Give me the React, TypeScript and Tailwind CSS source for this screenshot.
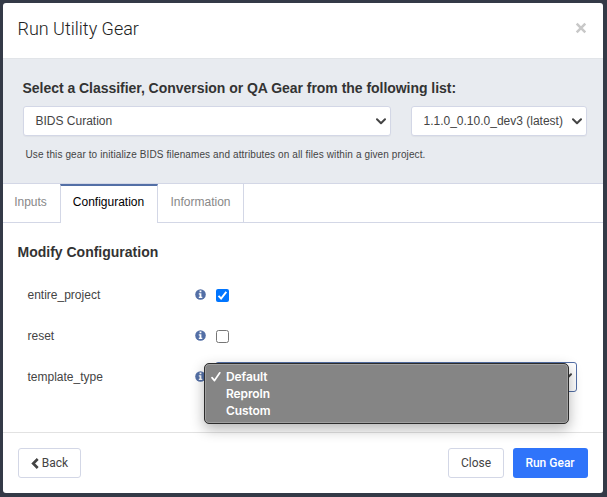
import type { ReactNode } from "react";

function Chevron({ className = "" }: { className?: string }) {
  return (
    <svg viewBox="0 0 10 7" className={`h-[7px] w-[10px] shrink-0 ${className}`} fill="none" stroke="#444" strokeWidth="2">
      <path d="M1 1.2 L5 5.2 L9 1.2" strokeLinecap="round" strokeLinejoin="round" />
    </svg>
  );
}

function Info() {
  return (
    <svg viewBox="0 0 11 11" className="h-[11px] w-[11px] shrink-0">
      <circle cx="5.5" cy="5.5" r="5.3" fill="#536fa6" />
      <path fill="#fff" d="M4.6 1.6h1.8v1.6H4.6zM3.8 4.2h2.6v3.5h.9V9H3.8V7.7h.8V5.4h-.8z" />
    </svg>
  );
}

function Row({ label, children }: { label: string; children: ReactNode }) {
  return (
    <div className="flex h-[41px] items-center pl-[24.5px]">
      <span className="w-[167.5px] text-[12px] text-[#444]">{label}</span>
      <Info />
      {children}
    </div>
  );
}

function Field({ text, className }: { text: string; className: string }) {
  return (
    <div className={`flex h-[30px] shrink-0 items-center justify-between rounded-[3px] border border-[#d3d7e6] bg-white pr-1 pl-[11.5px] text-[12px] text-[#444] shadow-[0_1px_1px_rgba(0,0,0,0.04)] ${className}`}>
      <span className="whitespace-nowrap">{text}</span>
      <Chevron />
    </div>
  );
}

function Option({ text, selected = false }: { text: string; selected?: boolean }) {
  return (
    <div className="flex h-[17px] items-center">
      <span className="w-[16px]">
        {selected && (
          <svg viewBox="0 0 11 11" className="h-[11px] w-[11px]" fill="none" stroke="#fff" strokeWidth="1.7" strokeLinecap="round" strokeLinejoin="round">
            <path d="M2 6.6 L4.5 9.6 L9.8 1.8" />
          </svg>
        )}
      </span>
      {text}
    </div>
  );
}

export default function App() {
  return (
    <div className="relative h-[497px] w-[607px] overflow-hidden bg-[#343a47] px-[3px] pt-[3px] font-['Liberation_Sans',Arial,sans-serif]">
      <div className="flex h-[490px] w-[600px] flex-col overflow-hidden rounded-[3px] bg-white">
        <header className="flex h-[55px] items-start justify-between pt-[12px] pr-[16px] pl-[14.5px]">
          <h1 className="font-[Roboto,sans-serif] text-[18px] leading-[28px] font-light text-[#222]">Run Utility Gear</h1>
          <svg viewBox="0 0 12 12" className="mt-[7px] h-[12px] w-[12px]" stroke="#c8c8c8" strokeWidth="2.5">
            <path d="M1.7 1.7 L10.3 10.3 M10.3 1.7 L1.7 10.3" />
          </svg>
        </header>
        <section className="h-[126px] border-t border-b border-t-[#e1e4e8] border-b-[#d3d7e6] bg-[#e8ebf0] pt-[20px] pl-[20px]">
          <h2 className="-ml-[0.5px] h-[27px] text-[14px] leading-[18px] font-bold tracking-[-0.035px] whitespace-nowrap text-[#333]">
            Select a Classifier, Conversion or QA Gear from the following list:
          </h2>
          <div className="flex gap-5">
            <Field text="BIDS Curation" className="w-[368px]" />
            <Field text="1.1.0_0.10.0_dev3 (latest)" className="w-[176px]" />
          </div>
          <p className="mt-[12px] pl-[2.5px] text-[10px] leading-[14px] tracking-[0.11px] text-[#444]">
            Use this gear to initialize BIDS filenames and attributes on all files within a given project.
          </p>
        </section>
        <nav className="flex h-[39px] shrink-0 text-[12px] text-[#888]">
          <div className="flex w-[57px] items-center justify-center border-b border-[#d3d7e6] pr-[2px] pb-[2px]">Inputs</div>
          <div className="flex w-[98px] items-center justify-center border-x border-t-2 border-x-[#d3d7e6] border-t-[#536fa6] pr-[1px] pb-[5px] text-black">Configuration</div>
          <div className="flex w-[86px] items-center justify-center border-r border-b border-[#d3d7e6] pb-[2px]">Information</div>
          <div className="flex-1 border-b border-[#d3d7e6]" />
        </nav>
        <main className="h-[209px] shrink-0 pt-[19px]">
          <h3 className="mb-[12px] pl-[14.5px] text-[14px] leading-[20px] font-bold text-[#333]">Modify Configuration</h3>
          <Row label="entire_project">
            <span className="relative top-[1px] ml-[10px] flex h-[13px] w-[13px] items-center justify-center rounded-[2px] bg-[#0075ff]">
              <svg viewBox="0 0 13 13" className="h-[13px] w-[13px]" fill="none" stroke="#fff" strokeWidth="1.9">
                <path d="M2.5 6.8 L5.1 9.5 L10.3 2.8" />
              </svg>
            </span>
          </Row>
          <Row label="reset">
            <span className="relative top-[1px] ml-[10px] h-[13px] w-[13px] rounded-[2.5px] border border-[#767676] bg-white" />
          </Row>
          <Row label="template_type">
            <div className="ml-[9px] flex h-[30px] w-[362px] items-center justify-end rounded-[3px] border border-[#536fa6] pr-[4px]">
              <Chevron />
            </div>
          </Row>
        </main>
        <footer className="flex flex-1 items-center justify-between border-t border-[#e2e2e2] pr-[15px] pl-[15px] font-[Roboto,sans-serif] text-[12px] text-[#444]">
          <button className="flex h-[30px] w-[63px] items-center justify-center gap-[3px] rounded-[3px] border border-[#d3d7e6]">
            <svg viewBox="0 0 8 11" className="h-[11px] w-[8px]" fill="none" stroke="#444" strokeWidth="2.7">
              <path d="M6.7 1 L2.2 5.5 L6.7 10" />
            </svg>
            Back
          </button>
          <div className="flex gap-[9px]">
            <button className="h-[30px] w-[56px] rounded-[3px] border border-[#d3d7e6]">Close</button>
            <button className="h-[30px] w-[75px] rounded-[3px] bg-[#2f74fa] pr-[1px] font-medium text-white">Run Gear</button>
          </div>
        </footer>
      </div>
      <div className="absolute top-[363px] left-[204px] h-[61px] w-[365px] rounded-[5px] border border-[#2c2c2c] bg-[#858585] pt-[4px] pl-[5px] font-[Inter,sans-serif] text-[12px] font-semibold tracking-[-0.1px] text-white shadow-[inset_0_0_0_1px_rgba(255,255,255,0.22),0_5px_14px_rgba(0,0,0,0.3)]">
        <Option text="Default" selected />
        <Option text="ReproIn" />
        <Option text="Custom" />
      </div>
    </div>
  );
}
